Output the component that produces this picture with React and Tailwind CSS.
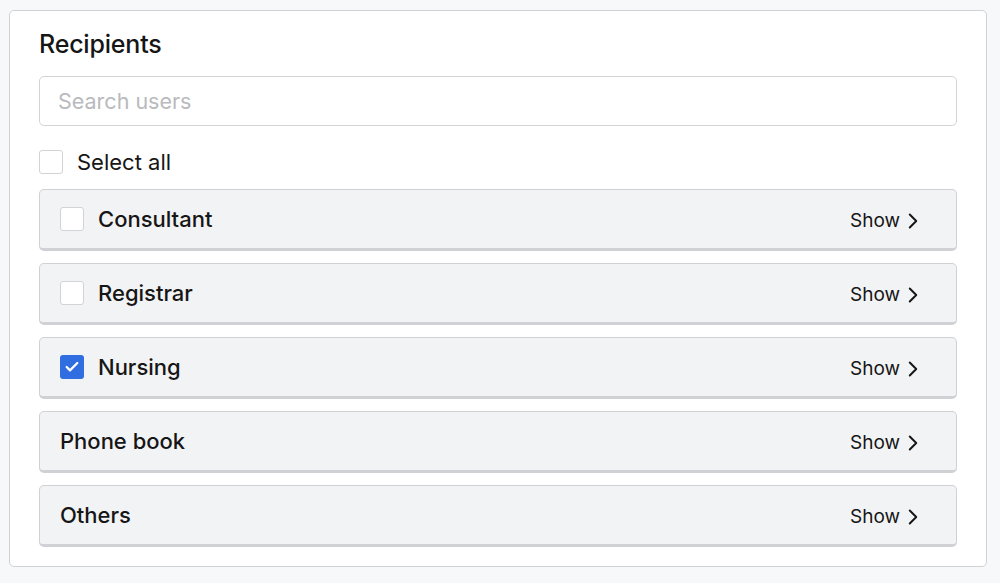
import { Check, ChevronRight } from 'lucide-react';

const groups = [
    { name: 'Consultant', checkbox: true, checked: false },
    { name: 'Registrar', checkbox: true, checked: false },
    { name: 'Nursing', checkbox: true, checked: true },
    { name: 'Phone book', checkbox: false },
    { name: 'Others', checkbox: false },
];

function Box({ checked }) {
    if (checked) {
        return (
            <span className="h-6 w-6 shrink-0 rounded-[3px] bg-[#2f6de0] flex items-center justify-center">
                <Check size={16} strokeWidth={3.4} className="text-white" />
            </span>
        );
    }
    return <span className="h-6 w-6 shrink-0 rounded-[3px] border border-[#d2d3d7] bg-white" />;
}

export default function App() {
    return (
        <div className="min-h-screen bg-[#f7f8fa] pt-[10px] pl-[9px] font-['Inter','Liberation_Sans',sans-serif] text-[#161616]">
            <div className="w-[978px] bg-white border border-[#d0d1d5] rounded-[5px] px-[29px] pt-[17px] pb-[19px]">
                <h2 className="text-[25px] leading-8 font-medium tracking-[-0.2px]">Recipients</h2>

                {/* Search */}
                <input
                    type="text"
                    placeholder="Search users"
                    className="mt-4 w-full h-[50px] px-[18px] text-[21.5px] border border-[#d3d4d8] rounded-[5px] placeholder:text-[#b9babe] outline-none"
                />

                {/* Select all */}
                <label className="mt-6 h-6 flex items-center gap-[14px] text-[22px]">
                    <Box checked={false} />
                    Select all
                </label>

                {/* Groups */}
                <div className="mt-[15px] flex flex-col gap-3">
                    {groups.map(g => (
                        <div
                            key={g.name}
                            className="h-[62px] flex items-center justify-between bg-[#f2f3f5] border border-[#d0d1d5] border-b-[3px] rounded-[5px] pl-5 pr-[30px]"
                        >
                            <div className="flex items-center gap-[14px]">
                                {g.checkbox && <Box checked={g.checked} />}
                                <span className="text-[22px] font-medium">{g.name}</span>
                            </div>
                            <button className="flex items-center gap-0 text-[19px] leading-7 pt-[3px]">
                                Show
                                <ChevronRight size={26} strokeWidth={1.8} />
                            </button>
                        </div>
                    ))}
                </div>
            </div>
        </div>
    );
}
